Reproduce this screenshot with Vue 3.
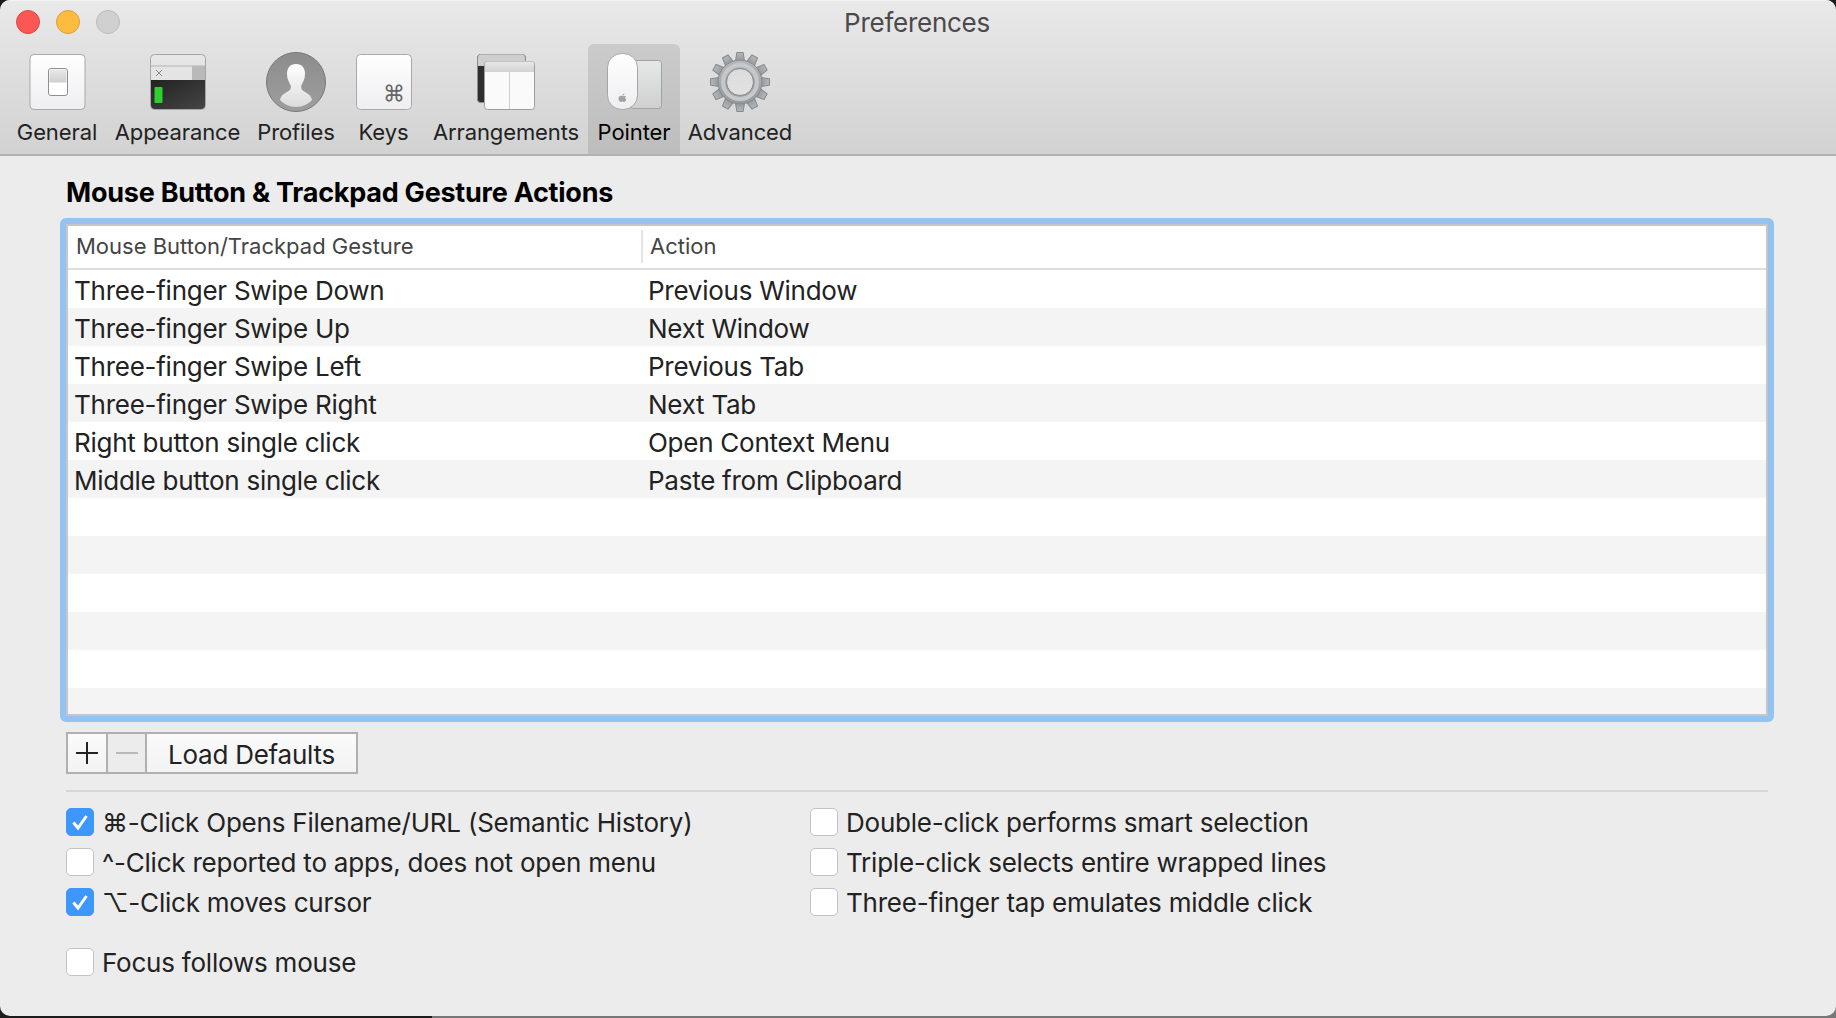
<template>
  <div class="window">
    <header class="toolbar">
      <div class="title-row">
        <div class="lights">
          <span class="light red"></span>
          <span class="light yellow"></span>
          <span class="light off"></span>
        </div>
        <span class="title">Preferences</span>
      </div>
      <nav class="tabs">
        <div class="tab" :class="{ active: tab.name === 'Pointer' }" v-for="tab in tabs" :key="tab.name">
          <svg class="tab-icon" width="64" height="64" viewBox="0 0 64 64">
            <template v-if="tab.name === 'General'">
              <rect x="5" y="4.500" width="55" height="55" rx="4" fill="url(#paper)" stroke="#a9a9a9" />
              <rect x="23.500" y="18.500" width="19" height="27" rx="2.500" fill="#fff" stroke="#8e8e8e" />
              <rect x="24.500" y="19.500" width="17" height="13" fill="url(#knob)" />
            </template>
            <template v-if="tab.name === 'Appearance'">
              <rect x="4.500" y="4.500" width="55" height="55" rx="4" fill="url(#bar)" stroke="#a5a5a5" />
              <rect x="5" y="16" width="54" height="14" fill="#e4e4e4" />
              <path d="M5 16h54" stroke="#b5b5b5" />
              <rect x="46" y="16" width="13" height="14" fill="#b9b9b9" />
              <path d="M5 30h54v25a4 4 0 0 1-4 4H9a4 4 0 0 1-4-4z" fill="url(#term)" />
              <path d="M10 20l6 6M16 20l-6 6" stroke="#8a8a8a" fill="none" />
              <rect x="8.500" y="37" width="8" height="16" rx="1" fill="#2fcf2c" />
            </template>
            <template v-if="tab.name === 'Profiles'">
              <circle cx="32" cy="32" r="29.500" fill="url(#disc)" stroke="#777" />
              <path d="M32 14c-6 0-9 4-9 10 0 5 2 8 3.500 11 1 2.500 0 5-2 6-4 2.500-7.500 4-8.500 9 4 4 9 7 16 7s12-3 16-7c-1-5-4.500-6.500-8.500-9-2-1-3-3.500-2-6 1.500-3 3.500-6 3.500-11 0-6-3-10-9-10z" fill="url(#person)" />
            </template>
            <template v-if="tab.name === 'Keys'">
              <rect x="4.500" y="4.500" width="55" height="55" rx="4" fill="url(#paper)" stroke="#a9a9a9" />
              <text x="42" y="51" class="cmd-glyph">⌘</text>
            </template>
            <template v-if="tab.name === 'Arrangements'">
              <rect x="3.500" y="4.500" width="48" height="48" rx="3" fill="#2f2f2f" stroke="#8d8d8d" />
              <path d="M4 7.500a3 3 0 0 1 3-3h41a3 3 0 0 1 3 3V16H4z" fill="#cfcfcf" />
              <rect x="10.500" y="11.500" width="50" height="48" rx="3" fill="#fafafa" stroke="#9d9d9d" />
              <path d="M11 14.500a3 3 0 0 1 3-3h43a3 3 0 0 1 3 3V22H11z" fill="url(#bar)" />
              <path d="M35.500 22v37" stroke="#cfcfcf" />
            </template>
            <template v-if="tab.name === 'Pointer'">
              <rect x="28.500" y="10.500" width="31" height="48" rx="3" fill="url(#pad)" stroke="#a2a2a2" />
              <rect x="5.500" y="3.500" width="30" height="56" rx="14" fill="url(#paper)" stroke="#a5a5a5" />
              <path d="M20.800 46.500c1-.6 2.400-.6 3.200 0-.9.6-1.100 2.300.2 3-.4 1.300-1.200 2.500-2 2.500-.7 0-1-.4-1.700-.4s-1 .4-1.700.4c-1 0-2.300-2-2.300-3.600 0-2 1.700-3 3-2.600.5.100.9.300 1.300.200zM20.500 45.800c0-1.100.8-2 1.900-2.200 0 1.200-.8 2.100-1.900 2.200z" fill="#a2a2a2" />
            </template>
            <template v-if="tab.name === 'Advanced'">
              <path
                v-for="angle in gearTeeth"
                :key="angle"
                d="M27.500 11 L28.800 2.500 H35.200 L36.500 11 Z"
                fill="url(#steel)"
                stroke="#85898c"
                :transform="`rotate(${angle} 32 32)`"
              />
              <circle cx="32" cy="32" r="22" fill="url(#steel)" stroke="#85898c" />
              <circle cx="32" cy="32" r="17" fill="none" stroke="#c6c9cb" stroke-width="4" />
              <circle cx="32" cy="32" r="13.500" fill="url(#hole)" stroke="#85898c" />
            </template>
          </svg>
          <span class="tab-label">{{ tab.name }}</span>
        </div>
      </nav>
      <svg class="defs" width="0" height="0">
        <defs>
          <linearGradient id="paper" x1="0" y1="0" x2="0" y2="1">
            <stop offset="0" stop-color="#ffffff" />
            <stop offset="1" stop-color="#eeeef1" />
          </linearGradient>
          <linearGradient id="knob" x1="0" y1="0" x2="0" y2="1">
            <stop offset="0" stop-color="#e8e8e8" />
            <stop offset="1" stop-color="#cfcfcf" />
          </linearGradient>
          <linearGradient id="term" x1="0" y1="0" x2="1" y2="1">
            <stop offset="0" stop-color="#222" />
            <stop offset="1" stop-color="#454545" />
          </linearGradient>
          <linearGradient id="disc" x1="0" y1="0" x2="0" y2="1">
            <stop offset="0" stop-color="#8c8c8c" />
            <stop offset="1" stop-color="#9e9e9e" />
          </linearGradient>
          <linearGradient id="person" x1="0" y1="0" x2="0" y2="1">
            <stop offset="0" stop-color="#ffffff" />
            <stop offset="1" stop-color="#dcdcdc" />
          </linearGradient>
          <linearGradient id="bar" x1="0" y1="0" x2="0" y2="1">
            <stop offset="0" stop-color="#e8e8e8" />
            <stop offset="1" stop-color="#d2d2d2" />
          </linearGradient>
          <linearGradient id="pad" x1="0" y1="0" x2="0" y2="1">
            <stop offset="0" stop-color="#e6e8e8" />
            <stop offset="1" stop-color="#cfcfcf" />
          </linearGradient>
          <linearGradient id="steel" x1="0" y1="0" x2="0" y2="1">
            <stop offset="0" stop-color="#b4b8ba" />
            <stop offset="1" stop-color="#95999c" />
          </linearGradient>
          <linearGradient id="hole" x1="0" y1="0" x2="0" y2="1">
            <stop offset="0" stop-color="#dcdcdc" />
            <stop offset="1" stop-color="#e2e2e2" />
          </linearGradient>
        </defs>
      </svg>
    </header>

    <main class="content">
      <h1 class="heading">Mouse Button &amp; Trackpad Gesture Actions</h1>
      <div class="table">
        <div class="table-inner">
          <div class="table-head">
            <span class="col-a">Mouse Button/Trackpad Gesture</span>
            <span class="col-b">Action</span>
          </div>
          <div class="row" v-for="(row, i) in rows" :key="i">
            <span class="col-a">{{ row[0] }}</span>
            <span class="col-b">{{ row[1] }}</span>
          </div>
        </div>
      </div>

      <div class="buttons">
        <button class="seg plus">
          <svg width="24" height="24" viewBox="0 0 24 24"><path d="M12 1v22M1 12h22" stroke="#222" stroke-width="2" /></svg>
        </button>
        <button class="seg minus">
          <svg width="24" height="24" viewBox="0 0 24 24"><path d="M1 12h22" stroke="#b9b9b9" stroke-width="2" /></svg>
        </button>
        <button class="seg load">Load Defaults</button>
      </div>

      <hr class="divider" />

      <div class="options">
        <div class="option-col left">
          <label class="option" v-for="opt in leftOptions" :key="opt.text">
            <span class="box" :class="{ checked: opt.checked }">
              <svg v-if="opt.checked" width="18" height="18" viewBox="0 0 18 18"><path d="M2.500 9.500l4.500 5.500 8.500-12" stroke="#fff" stroke-width="3" fill="none" /></svg>
            </span>
            <span class="option-text">{{ opt.text }}</span>
          </label>
        </div>
        <div class="option-col">
          <label class="option" v-for="opt in rightOptions" :key="opt">
            <span class="box"></span>
            <span class="option-text">{{ opt }}</span>
          </label>
        </div>
      </div>
      <label class="option focus">
        <span class="box"></span>
        <span class="option-text">Focus follows mouse</span>
      </label>
    </main>
  </div>
</template>

<script setup>
const tabs = [
  { name: 'General' },
  { name: 'Appearance' },
  { name: 'Profiles' },
  { name: 'Keys' },
  { name: 'Arrangements' },
  { name: 'Pointer' },
  { name: 'Advanced' },
]

// 12 teeth round the gear
const gearTeeth = Array.from({ length: 12 }, (_, i) => i * 30)

const rows = [
  ['Three-finger Swipe Down', 'Previous Window'],
  ['Three-finger Swipe Up', 'Next Window'],
  ['Three-finger Swipe Left', 'Previous Tab'],
  ['Three-finger Swipe Right', 'Next Tab'],
  ['Right button single click', 'Open Context Menu'],
  ['Middle button single click', 'Paste from Clipboard'],
  ['', ''],
  ['', ''],
  ['', ''],
  ['', ''],
  ['', ''],
  ['', ''],
]

const leftOptions = [
  { text: '⌘-Click Opens Filename/URL (Semantic History)', checked: true },
  { text: '^-Click reported to apps, does not open menu', checked: false },
  { text: '⌥-Click moves cursor', checked: true },
]

const rightOptions = [
  'Double-click performs smart selection',
  'Triple-click selects entire wrapped lines',
  'Three-finger tap emulates middle click',
]
</script>

<style>
html, body {
  margin: 0;
  background: #1c1c1c;
  overflow: hidden;
}
</style>

<style scoped>
.window {
  width: 1836px;
  height: 1018px;
  box-sizing: border-box;
  padding-bottom: 2px;
  display: flex;
  flex-direction: column;
  font-family: Inter, "DejaVu Sans", sans-serif;
  color: #222;
  overflow: hidden;
  /* strip under the window: what lies behind it in the screenshot */
  background: linear-gradient(to right, #1c1c1c 432px, #777 432px) bottom / 100% 14px no-repeat;
}

.toolbar {
  height: 156px;
  box-sizing: border-box;
  background: linear-gradient(#e9e9e9, #d2d2d2);
  border-bottom: 2px solid #b2b2b2;
  border-radius: 10px 10px 0 0;
  box-shadow: inset 0 1px 0 #f3f3f3;
  display: flex;
  flex-direction: column;
  flex: none;
}

.title-row {
  height: 46px;
  display: grid;
  grid-template-columns: 1fr auto 1fr;
  align-items: center;
  flex: none;
}

.lights {
  display: flex;
  gap: 16px;
  padding-left: 16px;
  margin-top: -2px;
}

.light {
  width: 24px;
  height: 24px;
  box-sizing: border-box;
  border-radius: 50%;
  border: 1px solid;
}
.red { background: #fc5753; border-color: #df4744; }
.yellow { background: #fdbc40; border-color: #de9f34; }
.off { background: #d0d0d0; border-color: #bcbcbc; }

.title {
  font-size: 26px;
  color: #4a4a4a;
  letter-spacing: -0.26px;
  margin: -1px 2px 0 0;
}

.tabs {
  display: grid;
  grid-template-columns: 98px 143px 94px 81px 164px 92px 120px;
  padding-left: 8px;
  flex: 1;
  min-height: 0;
}

.tab {
  display: flex;
  flex-direction: column;
  align-items: center;
  border-radius: 6px 6px 0 0;
  margin-top: -2px;
}
.tab.active {
  background: linear-gradient(#cbcbcb, #bdbdbd);
  color: #000;
}

.tab-icon {
  display: block;
  margin-top: 6px;
  flex: none;
}

.tab-label {
  font-size: 22px;
  line-height: 26px;
  margin-top: 5px;
  white-space: nowrap;
  letter-spacing: -0.1px;
}

.cmd-glyph {
  font-size: 22px;
  fill: #666;
  text-anchor: middle;
}

.defs {
  position: absolute;
}

.content {
  flex: 1;
  background: #ececec;
  padding: 0 68px 0 66px;
  border-radius: 0 0 10px 10px;
  min-height: 0;
}

.heading {
  margin: 21px 0 0;
  font-size: 27px;
  line-height: 32px;
  font-weight: 700;
  color: #000;
  letter-spacing: -0.24px;
}

.table {
  box-sizing: border-box;
  height: 504px;
  margin: 9px -6px 0 -6px;
  border: 6px solid #93c3f1;
  border-radius: 6px;
  background: #93c3f1;
}

.table-inner {
  box-sizing: border-box;
  height: 492px;
  border: 2px solid #c6c6c6;
  background: #fff;
  overflow: hidden;
}

.table-head {
  display: flex;
  height: 44px;
  box-sizing: border-box;
  align-items: center;
  border-bottom: 2px solid #dedede;
  font-size: 22px;
  color: #444;
  padding: 0 0 2px 8px;
}
.table-head .col-a {
  width: 565px;
  height: 33px;
  line-height: 33px;
  border-right: 2px solid #e4e4e4;
  flex: none;
  box-sizing: content-box;
}
.table-head .col-b {
  padding-left: 7px;
}

.row {
  display: flex;
  align-items: center;
  box-sizing: border-box;
  height: 38px;
  padding-top: 2px;
  font-size: 26px;
  letter-spacing: -0.26px;
  padding-left: 6px;
}
.row:nth-child(odd) {
  background: #f4f4f4;
}
.row .col-a {
  width: 574px;
  flex: none;
}

.buttons {
  display: flex;
  margin-top: 10px;
  height: 42px;
}

.seg {
  box-sizing: border-box;
  height: 42px;
  border: 2px solid #b0b0b0;
  background: linear-gradient(#fafafa, #f3f3f3);
  font: inherit;
  font-size: 26px;
  letter-spacing: -0.25px;
  color: #222;
  padding: 0;
  display: flex;
  align-items: center;
  justify-content: center;
}
.plus { width: 42px; }
.minus {
  width: 41px;
  margin-left: -2px;
  background: #ececec;
}
.load {
  width: 213px;
  margin-left: -2px;
  padding-top: 2px;
}

.divider {
  border: none;
  height: 2px;
  background: #d6d6d6;
  margin: 16px 0 0;
}

.options {
  display: flex;
  margin-top: 16px;
}

.option-col {
  display: flex;
  flex-direction: column;
  gap: 12px;
}
.option-col.left {
  width: 744px;
}

.option {
  display: flex;
  align-items: center;
  gap: 8px;
  font-size: 26px;
  letter-spacing: -0.22px;
  line-height: 28px;
  height: 28px;
  white-space: nowrap;
}

.option-text {
  padding-top: 2px;
}

.box {
  box-sizing: border-box;
  width: 28px;
  height: 28px;
  border-radius: 5px;
  background: #fff;
  border: 1px solid #c2c2c2;
  display: flex;
  align-items: center;
  justify-content: center;
  flex: none;
}
.box.checked {
  background: #3d97fc;
  border-color: #3d97fc;
}

.focus {
  margin-top: 32px;
}
</style>
